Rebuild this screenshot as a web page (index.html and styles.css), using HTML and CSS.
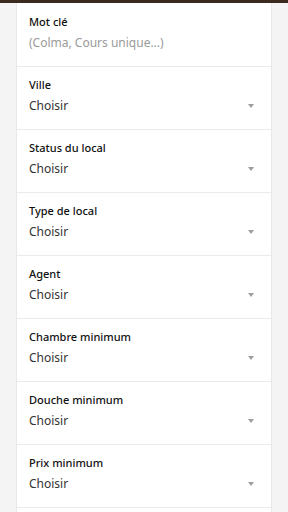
FILE: index.html
```html
<!DOCTYPE html>
<html lang="fr">

<head>
    <meta charset="UTF-8">
    <title>Recherche</title>
    <link rel="stylesheet" href="styles.css">
</head>

<body>
    <div class="top-band"></div>

    <div class="filter-card">
        <!-- mot clé -->
        <div class="field">
            <div class="field-label">Mot clé</div>
            <div class="field-input placeholder">(Colma, Cours unique...)</div>
        </div>

        <div class="field">
            <div class="field-label">Ville</div>
            <div class="field-select">Choisir<span class="arrow"></span></div>
        </div>

        <div class="field">
            <div class="field-label">Status du local</div>
            <div class="field-select">Choisir<span class="arrow"></span></div>
        </div>

        <div class="field">
            <div class="field-label">Type de local</div>
            <div class="field-select">Choisir<span class="arrow"></span></div>
        </div>

        <div class="field">
            <div class="field-label">Agent</div>
            <div class="field-select">Choisir<span class="arrow"></span></div>
        </div>

        <div class="field">
            <div class="field-label">Chambre minimum</div>
            <div class="field-select">Choisir<span class="arrow"></span></div>
        </div>

        <div class="field">
            <div class="field-label">Douche minimum</div>
            <div class="field-select">Choisir<span class="arrow"></span></div>
        </div>

        <div class="field">
            <div class="field-label">Prix minimum</div>
            <div class="field-select">Choisir<span class="arrow"></span></div>
        </div>

        <!-- suite du formulaire (hors écran) -->
        <div class="field field-empty"></div>
    </div>
</body>

</html>
```

FILE: styles.css
```css
* {
    box-sizing: border-box;
    margin: 0;
    padding: 0;
}

body {
    font-family: 'Noto Sans', 'Liberation Sans', sans-serif;
    background-color: #f4f4f4;
    color: #222;
}

.top-band {
    height: 3px;
    background-color: #3d2a1e;
}

.filter-card {
    margin: 0 16px;
    padding-top: 1px;
    background-color: #fff;
    border-left: 1px solid #e8e8e8;
    border-right: 1px solid #e8e8e8;
}

.field {
    height: 63px;
    padding: 10px 17px 0 12px;
    border-bottom: 1px solid #ebebeb;
}

.field-empty {
    height: 20px;
    border-bottom: none;
}

.field-label {
    font-size: 11px;
    font-weight: 500;
    line-height: 16px;
    color: #111;
}

.field-input,
.field-select {
    margin-top: 4px;
    font-size: 12px;
    line-height: 18px;
    color: #333;
}

.placeholder {
    color: #9a9a9a;
}

.field-select {
    display: flex;
    justify-content: space-between;
    align-items: center;
}

.arrow {
    width: 0;
    height: 0;
    border-left: 3.5px solid transparent;
    border-right: 3.5px solid transparent;
    border-top: 4px solid #9e9e9e;
}
```
